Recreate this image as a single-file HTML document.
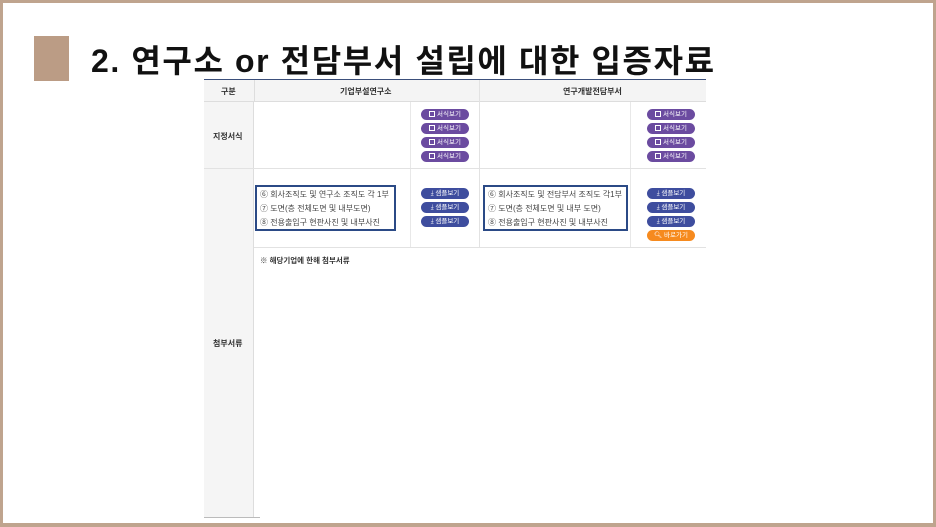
<!DOCTYPE html>
<html><head><meta charset="utf-8"><style>
*{margin:0;padding:0;box-sizing:border-box}
body{width:936px;height:527px;position:relative;overflow:hidden;background:#fff;font-family:"Liberation Sans","Noto Sans CJK KR",sans-serif}
.frame{position:absolute;left:0;top:0;width:936px;height:527px;border:3px solid #bfa48e;border-bottom-width:4px}
.sq{position:absolute;left:34px;top:36px;width:35px;height:45px;background:#bb9c85}
.title{position:absolute;left:91px;top:36px;font-size:32px;font-weight:bold;color:#111;white-space:nowrap;letter-spacing:1.6px}
.a{position:absolute}
.t{font-size:8px;color:#333;white-space:nowrap}
.btn{position:absolute;width:48px;height:11px;border-radius:6px;color:#fff;font-size:6.5px;line-height:11px;text-align:center;white-space:nowrap}
.p{background:#6b4ba0}.b{background:#3e4d9e}.o{background:#f68a1e}
.ic{display:inline-block;width:6px;height:6px;border:1px solid #fff;vertical-align:-1px;margin-right:2px}
.box{position:absolute;border:2.5px solid #2b4a86}
.li{font-size:8px;color:#444;line-height:14px;white-space:nowrap;padding-left:3px}
</style></head><body>
<div class="frame"></div>
<div class="sq"></div>
<div class="title">2. 연구소 or 전담부서 설립에 대한 입증자료</div>

<div class="a" style="left:204px;top:79px;width:502px;height:1px;background:#3b4f7b"></div>
<div class="a" style="left:204px;top:80px;width:502px;height:22px;background:#f4f4f4;border-bottom:1px solid #ddd"></div>
<div class="a" style="left:204px;top:102px;width:50px;height:416px;background:#f5f5f5;border-right:1px solid #ddd"></div>
<div class="a" style="left:204px;top:517px;width:56px;height:1px;background:#bbb"></div>
<div class="a" style="left:254px;top:80px;width:1px;height:22px;background:#ddd"></div>
<div class="a" style="left:479px;top:80px;width:1px;height:167px;background:#e2e2e2"></div>
<div class="a" style="left:410px;top:102px;width:1px;height:145px;background:#e8e8e8"></div>
<div class="a" style="left:630px;top:102px;width:1px;height:145px;background:#e8e8e8"></div>
<div class="a" style="left:204px;top:168px;width:502px;height:1px;background:#e2e2e2"></div>
<div class="a" style="left:254px;top:247px;width:452px;height:1px;background:#e2e2e2"></div>

<div class="a t" style="left:221px;top:86px;font-weight:bold">구분</div>
<div class="a t" style="left:340px;top:86px;font-weight:bold">기업부설연구소</div>
<div class="a t" style="left:563px;top:86px;font-weight:bold">연구개발전담부서</div>
<div class="a t" style="left:213px;top:131px;font-weight:bold">지정서식</div>
<div class="a t" style="left:213px;top:338px;font-weight:bold">첨부서류</div>

<div class="btn p" style="left:421px;top:109px"><span class="ic"></span>서식보기</div>
<div class="btn p" style="left:421px;top:123px"><span class="ic"></span>서식보기</div>
<div class="btn p" style="left:421px;top:137px"><span class="ic"></span>서식보기</div>
<div class="btn p" style="left:421px;top:151px"><span class="ic"></span>서식보기</div>
<div class="btn p" style="left:647px;top:109px"><span class="ic"></span>서식보기</div>
<div class="btn p" style="left:647px;top:123px"><span class="ic"></span>서식보기</div>
<div class="btn p" style="left:647px;top:137px"><span class="ic"></span>서식보기</div>
<div class="btn p" style="left:647px;top:151px"><span class="ic"></span>서식보기</div>

<div class="box" style="left:255px;top:185px;width:141px;height:46px"><div class="li" style="padding-top:1px">⑥ 회사조직도 및 연구소 조직도 각 1부</div><div class="li">⑦ 도면(층 전체도면 및 내부도면)</div><div class="li">⑧ 전용출입구 현판사진 및 내부사진</div></div>
<div class="box" style="left:483px;top:185px;width:145px;height:46px"><div class="li" style="padding-top:1px">⑥ 회사조직도 및 전담부서 조직도 각1부</div><div class="li">⑦ 도면(층 전체도면 및 내부 도면)</div><div class="li">⑧ 전용출입구 현판사진 및 내부사진</div></div>

<div class="btn b" style="left:421px;top:188px">⤓ 샘플보기</div>
<div class="btn b" style="left:421px;top:202px">⤓ 샘플보기</div>
<div class="btn b" style="left:421px;top:216px">⤓ 샘플보기</div>
<div class="btn b" style="left:647px;top:188px">⤓ 샘플보기</div>
<div class="btn b" style="left:647px;top:202px">⤓ 샘플보기</div>
<div class="btn b" style="left:647px;top:216px">⤓ 샘플보기</div>
<div class="btn o" style="left:647px;top:230px">🔍︎ 바로가기</div>

<div class="a t" style="left:260px;top:255px;font-weight:bold;font-size:7.5px">※ 해당기업에 한해 첨부서류</div>
</body></html>
